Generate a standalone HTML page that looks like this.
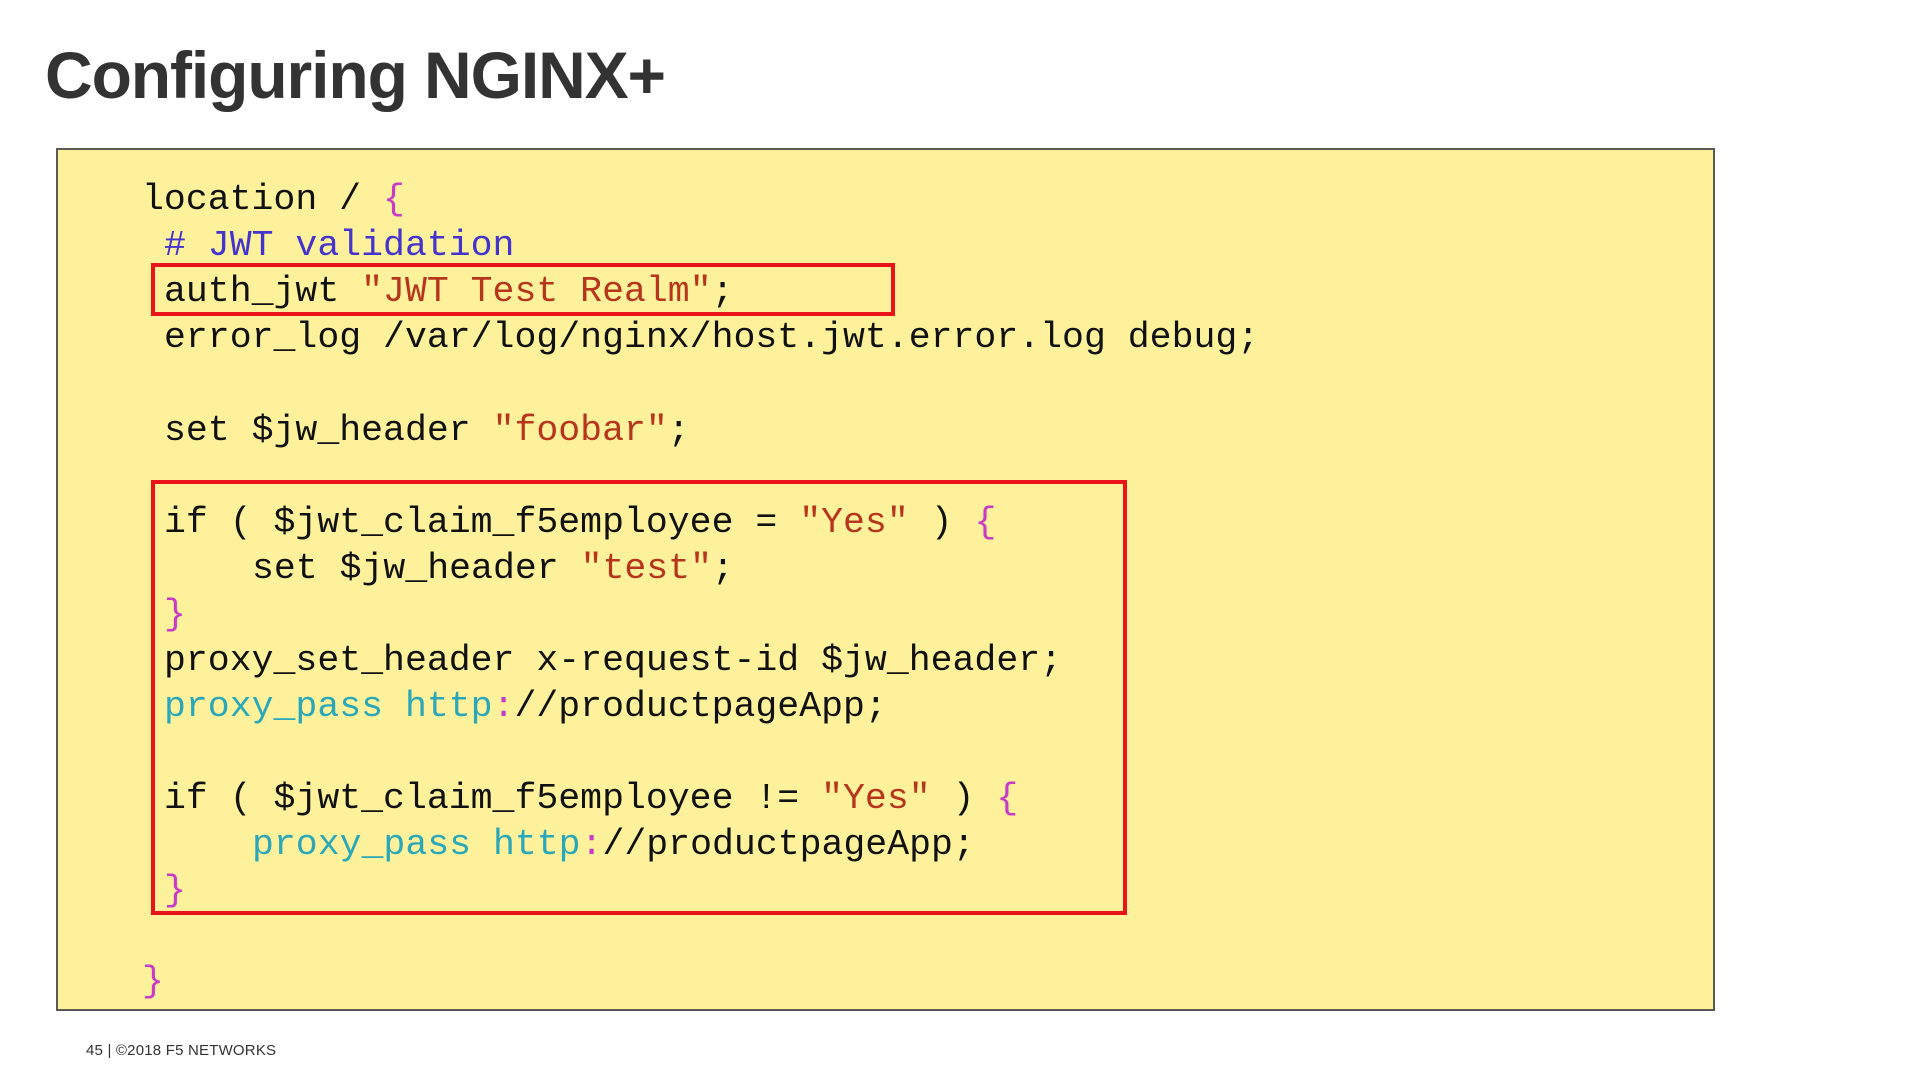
<!DOCTYPE html>
<html><head><meta charset="utf-8"><style>
body{margin:0;width:1920px;height:1080px;background:#fff;position:relative;overflow:hidden;font-family:"Liberation Sans",sans-serif}
.t{position:absolute;left:45px;top:30px;font-size:66px;font-weight:bold;color:#333;letter-spacing:-1.1px;line-height:90px}
.box{position:absolute;left:56px;top:148px;width:1655px;height:859px;background:#fdf29b;border:2px solid #5a5a55}
.l{position:absolute;font-family:"Liberation Mono",monospace;font-size:36.5px;line-height:46px;white-space:pre;color:#111}
.s{color:#b5361c}.c{color:#4433cc}.b{color:#c83ac8}.y{color:#2aa7b8}
.r{position:absolute;border:4px solid #e8141a;box-sizing:border-box}
.f{position:absolute;left:86px;top:1042px;font-size:15px;color:#333;letter-spacing:0.2px}
</style></head><body>
<div class="t">Configuring NGINX+</div>
<div class="box"></div>
<div class="l" style="left:142px;top:177px">location / <span class="b">{</span></div>
<div class="l c" style="left:164px;top:223px"># JWT validation</div>
<div class="l" style="left:164px;top:269px">auth_jwt <span class="s">"JWT Test Realm"</span>;</div>
<div class="l" style="left:164px;top:315px">error_log /var/log/nginx/host.jwt.error.log debug;</div>
<div class="l" style="left:164px;top:408px">set $jw_header <span class="s">"foobar"</span>;</div>
<div class="l" style="left:164px;top:500px">if ( $jwt_claim_f5employee = <span class="s">"Yes"</span> ) <span class="b">{</span></div>
<div class="l" style="left:252px;top:546px">set $jw_header <span class="s">"test"</span>;</div>
<div class="l b" style="left:164px;top:592px">}</div>
<div class="l" style="left:164px;top:638px">proxy_set_header x-request-id $jw_header;</div>
<div class="l" style="left:164px;top:684px"><span class="y">proxy_pass http</span><span class="b">:</span>//productpageApp;</div>
<div class="l" style="left:164px;top:776px">if ( $jwt_claim_f5employee != <span class="s">"Yes"</span> ) <span class="b">{</span></div>
<div class="l" style="left:252px;top:822px"><span class="y">proxy_pass http</span><span class="b">:</span>//productpageApp;</div>
<div class="l b" style="left:164px;top:868px">}</div>
<div class="l b" style="left:142px;top:959px">}</div>
<div class="r" style="left:151px;top:263px;width:744px;height:53px"></div>
<div class="r" style="left:151px;top:480px;width:976px;height:435px"></div>
<div class="f">45 | ©2018 F5 NETWORKS</div>
</body></html>
